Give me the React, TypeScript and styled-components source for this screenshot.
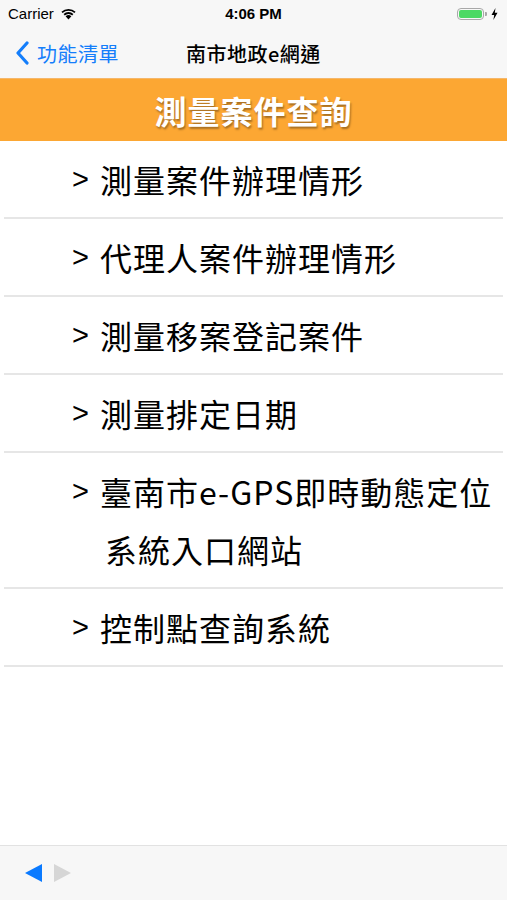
import React from 'react';
import styled, { createGlobalStyle } from 'styled-components';

const items: string[] = [
  '測量案件辦理情形',
  '代理人案件辦理情形',
  '測量移案登記案件',
  '測量排定日期',
  '臺南市e-GPS即時動態定位系統入口網站',
  '控制點查詢系統',
];

const App: React.FC = () => {
  return (
    <>
      <GlobalStyle />
      <Screen>
        <TopBars>
          <StatusBar>
            <StatusLeft>
              Carrier
              <WifiIcon />
            </StatusLeft>
            <Clock>4:06 PM</Clock>
            <StatusRight>
              <Battery>
                <BatteryFill />
              </Battery>
              <BatteryCap />
              <BoltIcon />
            </StatusRight>
          </StatusBar>
          <NavBar>
            <BackButton>
              <ChevronIcon />
              功能清單
            </BackButton>
            <NavTitle>南市地政e網通</NavTitle>
          </NavBar>
        </TopBars>
        <Banner>測量案件查詢</Banner>
        <MenuList>
          {items.map((label) => (
            <MenuRow key={label}>
              <Marker>&gt;</Marker>
              <MenuText>{label}</MenuText>
            </MenuRow>
          ))}
        </MenuList>
        <Toolbar>
          <Arrow $dir="left" $active />
          <Arrow $dir="right" />
        </Toolbar>
      </Screen>
    </>
  );
};

const WifiIcon: React.FC = () => (
  <svg width="17" height="13" viewBox="0 0 17 13">
    <path d="M8.5 12.5 L5.6 9.3 A4.2 4.2 0 0 1 11.4 9.3 Z" fill="#000" />
    <path d="M3.6 7.1 A7 7 0 0 1 13.4 7.1 L12.2 8.4 A5.3 5.3 0 0 0 4.8 8.4 Z" fill="#000" />
    <path d="M1.4 4.8 A10.2 10.2 0 0 1 15.6 4.8 L14.4 6.1 A8.5 8.5 0 0 0 2.6 6.1 Z" fill="#000" />
  </svg>
);

const BoltIcon: React.FC = () => (
  <svg width="7" height="12" viewBox="0 0 7 12">
    <path d="M4.5 0 L0.5 7 L3.2 7 L2.4 12 L6.5 4.8 L3.8 4.8 Z" fill="#000" />
  </svg>
);

const ChevronIcon: React.FC = () => (
  <svg width="16" height="24" viewBox="0 0 16 24">
    <path d="M13 2 L4 12 L13 22" stroke="#147efb" strokeWidth="3.2" fill="none" strokeLinecap="round" strokeLinejoin="round" />
  </svg>
);

const GlobalStyle = createGlobalStyle`
  html, body {
    margin: 0;
    padding: 0;
    background: #ffffff;
  }
  body {
    font-family: "Noto Sans CJK TC", "Noto Sans", sans-serif;
  }
`;

const Screen = styled.div`
  width: 507px;
  height: 900px;
  display: flex;
  flex-direction: column;
  background: #ffffff;
  overflow: hidden;
`;

const TopBars = styled.div`
  background: #f7f7f7;
  display: flex;
  flex-direction: column;
`;

const StatusBar = styled.div`
  height: 28px;
  display: grid;
  grid-template-columns: 1fr auto 1fr;
  align-items: center;
  padding: 0 8px;
  font-family: "Liberation Sans", Arial, sans-serif;
  font-size: 15px;
  color: #000;
`;

const StatusLeft = styled.div`
  display: flex;
  align-items: center;
  gap: 6px;
  padding-bottom: 2px;
`;

const Clock = styled.div`
  font-weight: bold;
  font-size: 15px;
  padding-bottom: 2px;
`;

const StatusRight = styled.div`
  display: flex;
  align-items: center;
  justify-content: flex-end;
  gap: 1px;
  padding-right: 1px;
`;

const Battery = styled.div`
  width: 27px;
  height: 12px;
  border: 1px solid #a8a8a8;
  border-radius: 4px;
  padding: 1px;
  box-sizing: border-box;
  display: flex;
`;

const BatteryFill = styled.div`
  flex: 1;
  background: #4cd964;
  border-radius: 2px;
`;

const BatteryCap = styled.div`
  width: 2px;
  height: 4px;
  background: #a8a8a8;
  border-radius: 0 1px 1px 0;
  margin-right: 3px;
`;

const NavBar = styled.div`
  height: 50px;
  display: flex;
  align-items: center;
  padding: 0 0 0 14px;
  font-size: 20px;
  letter-spacing: 0.5px;
`;

const BackButton = styled.div`
  display: flex;
  align-items: center;
  gap: 7px;
  color: #147efb;
  width: 172px;
`;

const NavTitle = styled.div`
  color: #000;
  font-weight: 500;
  font-size: 20px;
`;

const Banner = styled.div`
  height: 63px;
  background: #fca733;
  color: #ffffff;
  display: flex;
  align-items: center;
  justify-content: center;
  font-size: 32px;
  letter-spacing: 1px;
  font-weight: bold;
  text-shadow: 1px 2px 2px rgba(0, 0, 0, 0.35);
  border-top: 1px solid #f5b76a;
  box-sizing: border-box;
`;

const MenuList = styled.div`
  flex: 1;
  display: flex;
  flex-direction: column;
  padding: 0 4px;
`;

const MenuRow = styled.div`
  display: flex;
  align-items: flex-start;
  padding: 9px 4px 9px 68px;
  border-bottom: 2px solid #e6e6e6;
  font-size: 32px;
  letter-spacing: 1px;
  line-height: 58px;
  color: #000;
`;

const Marker = styled.span`
  font-family: "Liberation Sans", Arial, sans-serif;
  font-size: 29px;
  width: 28px;
  flex-shrink: 0;
`;

const MenuText = styled.span`
  flex: 1;
  word-break: break-all;
  padding-left: 5px;
  text-indent: -5px;
`;

const Toolbar = styled.div`
  height: 54px;
  background: #f7f7f7;
  border-top: 1px solid #e2e2e2;
  display: flex;
  align-items: center;
  gap: 12px;
  padding-left: 25px;
`;

const Arrow = styled.div<{ $dir: 'left' | 'right'; $active?: boolean }>`
  width: 0;
  height: 0;
  border-top: 9px solid transparent;
  border-bottom: 9px solid transparent;
  ${({ $dir, $active }) =>
    $dir === 'left'
      ? `border-right: 17px solid ${$active ? '#0a7aff' : '#d6d6d6'};`
      : `border-left: 17px solid ${$active ? '#0a7aff' : '#d6d6d6'};`}
`;

export default App;
